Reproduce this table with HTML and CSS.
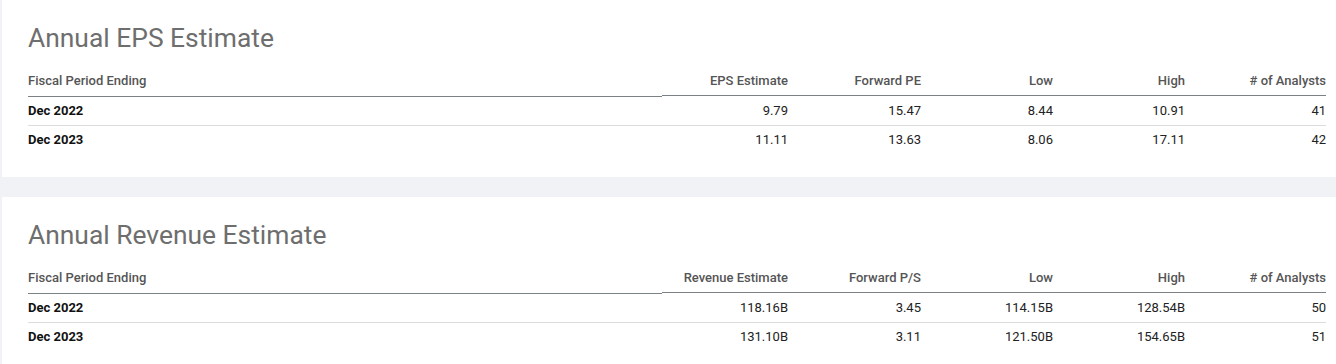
FILE: index.html
```html
<!DOCTYPE html>
<html lang="en">
<head>
<meta charset="utf-8">
<title>Estimates</title>
<link rel="stylesheet" href="styles.css">
</head>
<body>
<div class="page">
  <section class="card">
    <h2 class="card-title">Annual EPS Estimate</h2>
    <table class="est">
      <colgroup>
        <col class="c-label"><col class="c2"><col class="c3"><col class="c4"><col class="c5"><col class="c6">
      </colgroup>
      <thead>
        <tr><th class="lbl">Fiscal Period Ending</th><th>EPS Estimate</th><th>Forward PE</th><th>Low</th><th>High</th><th># of Analysts</th></tr>
      </thead>
      <tbody>
        <tr><td class="lbl">Dec 2022</td><td>9.79</td><td>15.47</td><td>8.44</td><td>10.91</td><td>41</td></tr>
        <tr><td class="lbl">Dec 2023</td><td>11.11</td><td>13.63</td><td>8.06</td><td>17.11</td><td>42</td></tr>
      </tbody>
    </table>
  </section>
  <section class="card">
    <h2 class="card-title">Annual Revenue Estimate</h2>
    <table class="est">
      <colgroup>
        <col class="c-label"><col class="c2"><col class="c3"><col class="c4"><col class="c5"><col class="c6">
      </colgroup>
      <thead>
        <tr><th class="lbl">Fiscal Period Ending</th><th>Revenue Estimate</th><th>Forward P/S</th><th>Low</th><th>High</th><th># of Analysts</th></tr>
      </thead>
      <tbody>
        <tr><td class="lbl">Dec 2022</td><td>118.16B</td><td>3.45</td><td>114.15B</td><td>128.54B</td><td>50</td></tr>
        <tr><td class="lbl">Dec 2023</td><td>131.10B</td><td>3.11</td><td>121.50B</td><td>154.65B</td><td>51</td></tr>
      </tbody>
    </table>
  </section>
</div>
</body>
</html>
```
FILE: styles.css
```css
html, body {
  margin: 0;
  padding: 0;
  background: #f1f2f6;
}
body {
  font-family: Roboto, "Liberation Sans", sans-serif;
}
.page {
  display: flex;
  flex-direction: column;
  gap: 20px;
  padding-left: 2px;
}
.card {
  background: #fff;
  padding: 22px 10px 23px 26px;
}
.card-title {
  margin: 0 0 11px 0;
  font-size: 26.4px;
  line-height: 32px;
  font-weight: 400;
  color: #6e6e6e;
}
.est {
  border-collapse: collapse;
  table-layout: fixed;
  width: 1298px;
}
.c-label { width: 634px; }
.c2 { width: 126px; }
.c3 { width: 133px; }
.c4 { width: 132px; }
.c5 { width: 132px; }
.c6 { width: 141px; }
.est th, .est td {
  padding: 0;
  text-align: right;
  font-size: 13px;
  line-height: 16px;
  white-space: nowrap;
}
.est th {
  font-weight: 500;
  color: #555;
  padding: 8px 0 8px 0;
  background: linear-gradient(#7b8285, #7b8285) left bottom 1px / 100% 1px no-repeat;
}
.est th.lbl {
  background-position: left bottom;
}
.est td {
  color: #222;
  padding: 6px 0;
}
.est tbody tr + tr td {
  border-top: 1px solid #dcdcdc;
}
.est .lbl {
  text-align: left;
}
.est td.lbl {
  font-weight: 700;
  color: #111;
}
```
